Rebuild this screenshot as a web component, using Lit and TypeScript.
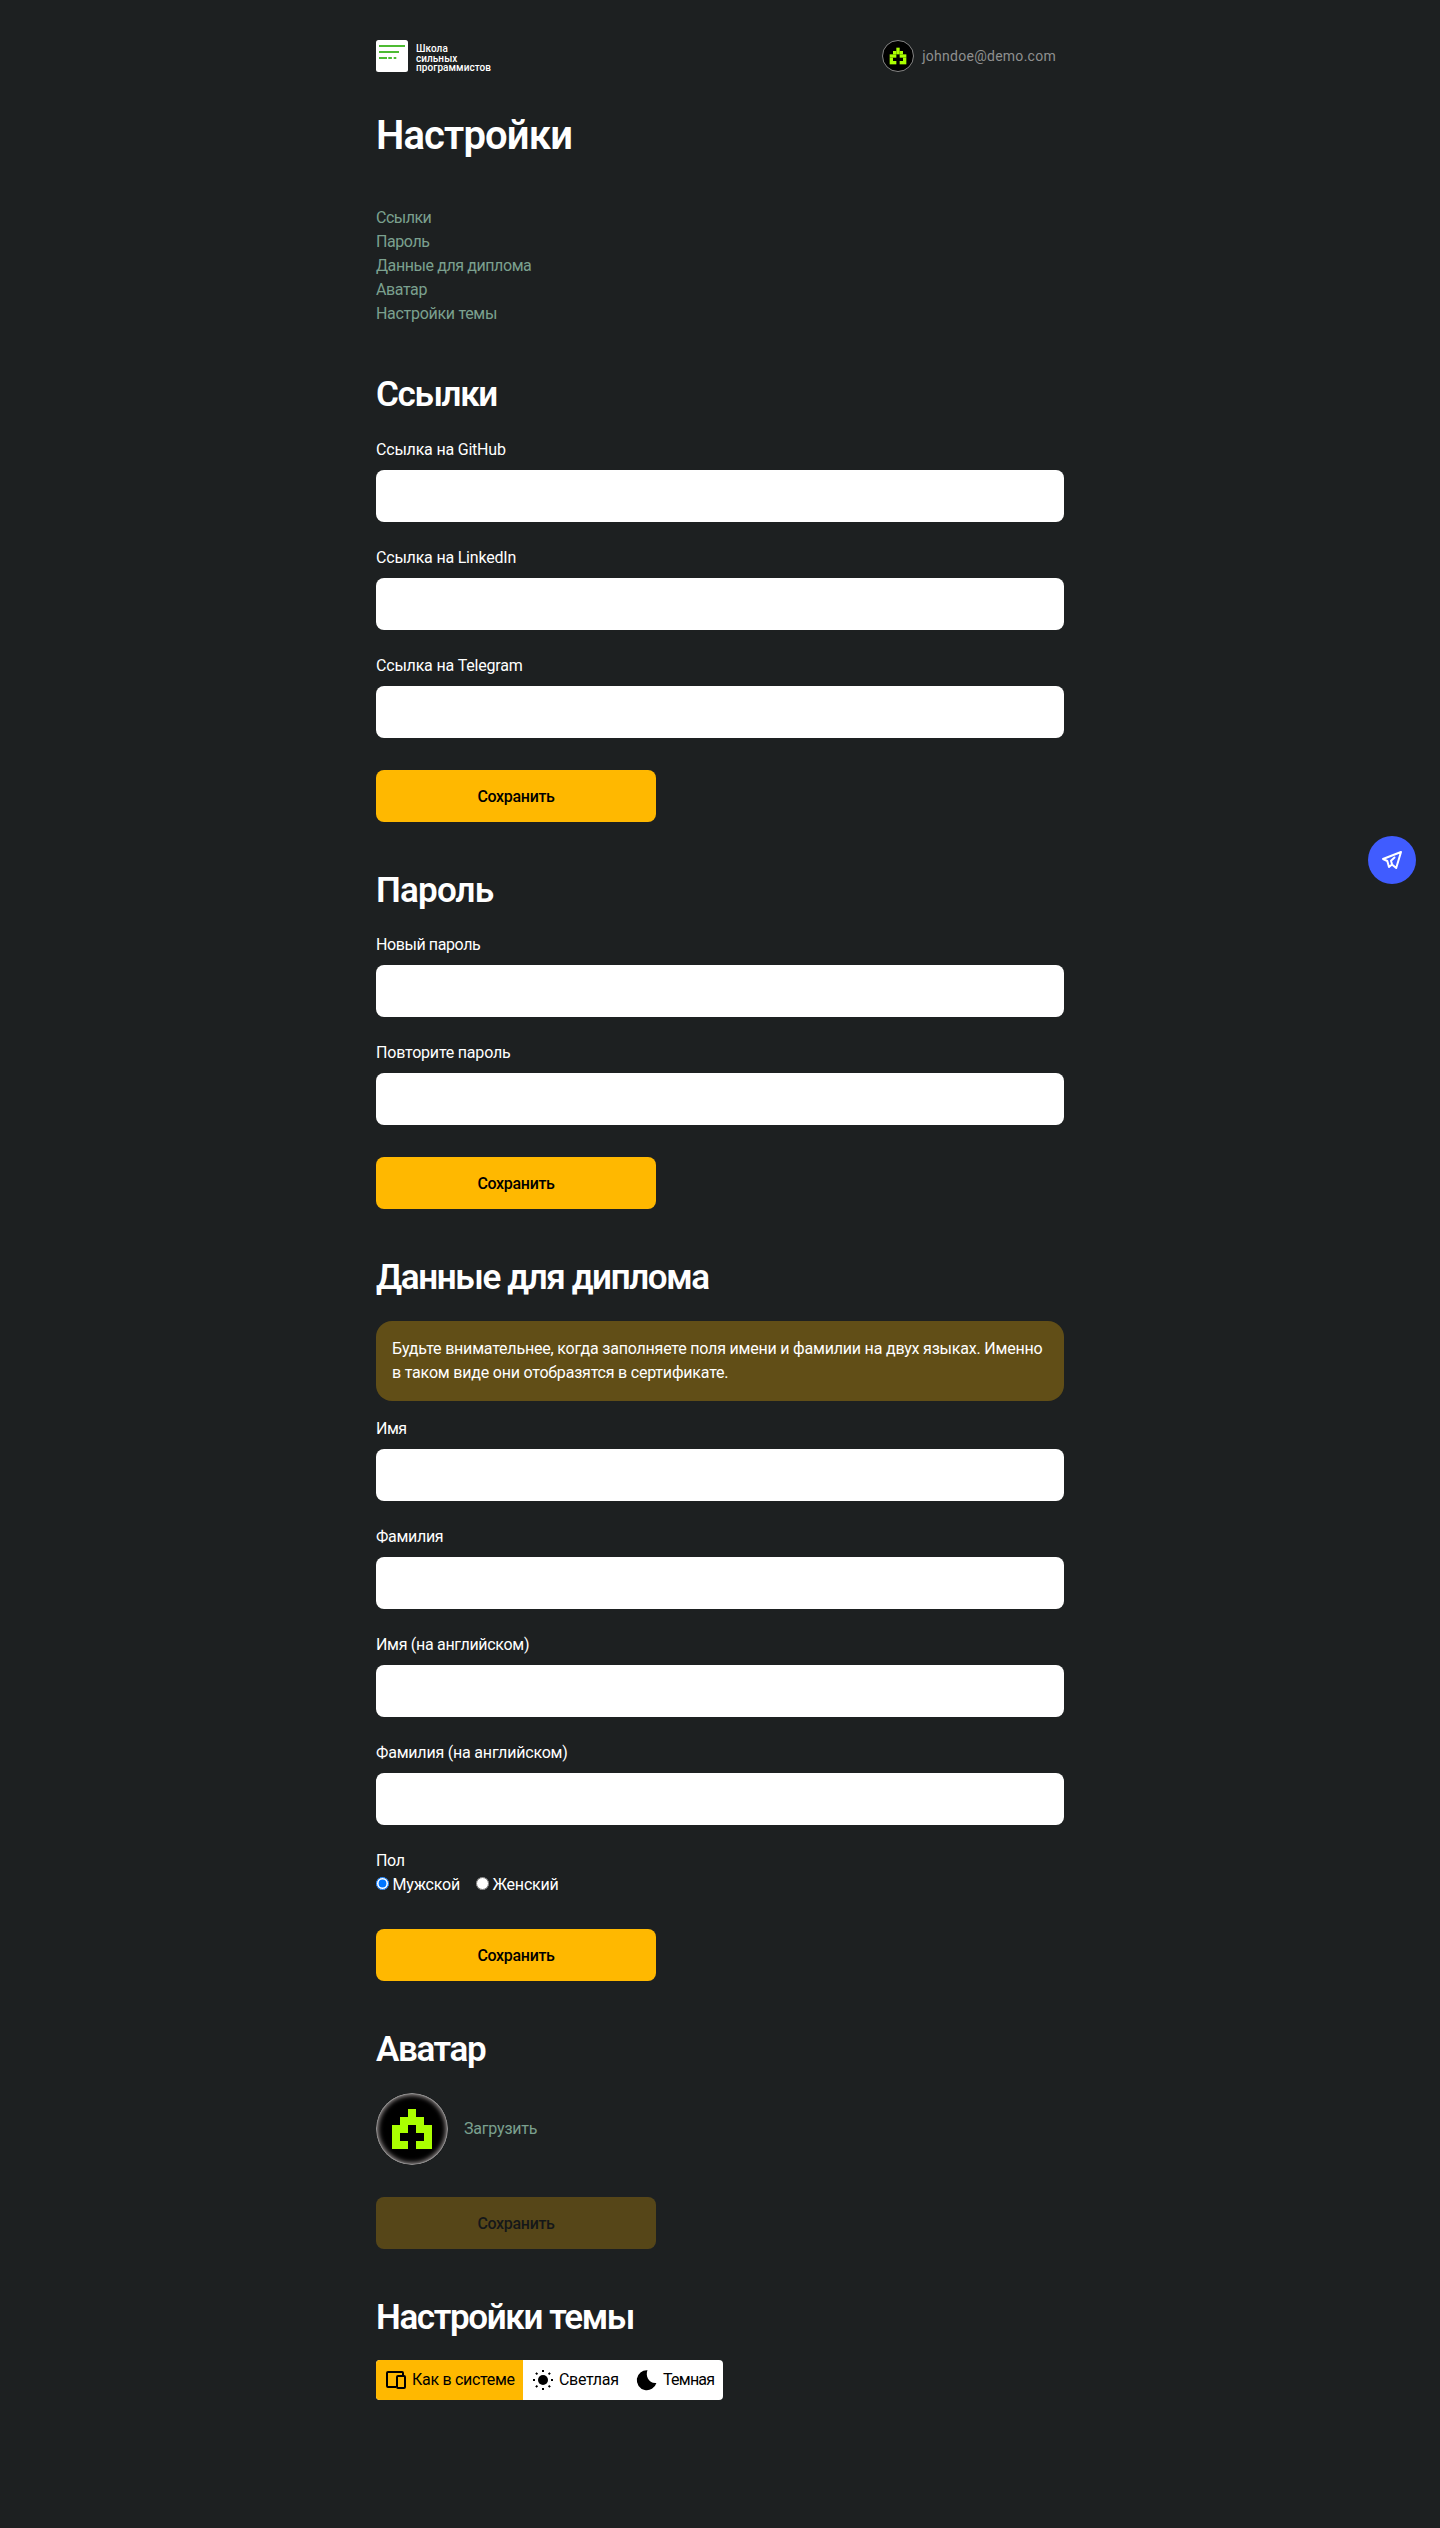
import { LitElement, html, svg, css } from "lit";

const AVATAR_CELLS: [number, number][] = [
  [4, 2],
  [3, 3], [4, 3], [5, 3],
  [2, 4], [3, 4], [5, 4], [6, 4],
  [2, 5], [6, 5],
  [2, 6], [3, 6], [5, 6], [6, 6],
];

const NAV: [string, string][] = [
  ["Ссылки", "t50"],
  ["Пароль", "t40"],
  ["Данные для диплома", "t40"],
  ["Аватар", "t40"],
  ["Настройки темы", "t30"],
];

class AppRoot extends LitElement {
  static styles = css`
    :host {
      display: block;
      min-height: 2528px;
      background: #1d2021;
      color: #fff;
      font: 400 16px/24px Roboto, "Liberation Sans", sans-serif;
    }
    * { box-sizing: border-box; }
    .page { width: 688px; margin: 0 auto; padding-top: 40px; }
    .header { display: flex; justify-content: space-between; height: 32px; }
    .logo { display: flex; gap: 8px; align-items: flex-start; }
    .logo svg { display: block; }
    .logo-text {
      padding-top: 4px;
      font-weight: 500;
      font-size: 10px;
      line-height: 9.6px;
      letter-spacing: 0.05px;
    }
    .logo-text span { display: block; }
    .user {
      display: flex;
      align-items: center;
      gap: 8px;
      padding-right: 8px;
      color: #8f9090;
      font-size: 14px;
      letter-spacing: 0.27px;
    }
    .avatar {
      position: relative;
      flex: none;
      border-radius: 50%;
      overflow: hidden;
      background: #000;
    }
    .avatar svg { display: block; width: 100%; height: 100%; }
    .avatar.small { width: 32px; height: 32px; border: 1px solid #858585; }
    .avatar.large { width: 72px; height: 72px; }
    .avatar.large::after {
      content: "";
      position: absolute;
      inset: 0;
      border-radius: 50%;
      box-shadow: inset 0 0 0 1px #8f8f8f, inset 0 0 5px 2px #a39c9c;
    }
    h1, h2 { margin: 0; font-weight: 600; white-space: nowrap; }
    h1 {
      margin-top: 42px;
      font-size: 40px;
      line-height: 44px;
      letter-spacing: -0.85px;
    }
    h2 {
      margin: 49px 0 23px;
      font-size: 35px;
      line-height: 39.6px;
      letter-spacing: -1.37px;
    }
    h2.loose { letter-spacing: -0.8px; }
    nav { display: flex; flex-direction: column; align-items: flex-start; margin-top: 48.2px; }
    a { color: #7ba08f; text-decoration: none; }
    .field { display: block; margin-bottom: 24px; }
    .field span { display: block; }
    .field input {
      display: block;
      width: 100%;
      height: 52px;
      margin: 8px 0 0;
      padding: 0 16px;
      border: 0;
      border-radius: 8px;
      background: #fff;
      font: inherit;
    }
    .save {
      display: block;
      width: 280px;
      height: 52px;
      margin: 32px 0 0;
      padding: 2px 0 0;
      border: 0;
      border-radius: 8px;
      background: #ffb800;
      color: #000;
      font: inherit;
      font-weight: 500;
      letter-spacing: -0.32px;
    }
    .save:disabled { opacity: 0.25; }
    .notice {
      margin-bottom: 16px;
      padding: 16px;
      border-radius: 16px;
      background: #614e17;
      letter-spacing: -0.2px;
    }
    .radios { display: flex; gap: 16px; }
    .radios label { letter-spacing: -0.2px; }
    .radios input { margin: 3px 3.5px 0 0; }
    .avatar-row { display: flex; align-items: center; gap: 16px; }
    .themes {
      display: inline-flex;
      height: 40px;
      border-radius: 4px;
      overflow: hidden;
      background: #fff;
      color: #000;
    }
    .theme { display: flex; align-items: center; gap: 4px; padding: 0 8px; white-space: nowrap; }
    .theme svg { flex: none; }
    .theme.system { width: 147px; background: #ffb800; }
    .theme.light { width: 104px; }
    .theme.dark { width: 96px; }
    .t20 { letter-spacing: -0.2px; }
    .t30 { letter-spacing: -0.3px; }
    .t40 { letter-spacing: -0.41px; }
    .t50 { letter-spacing: -0.52px; }
    .t75 { letter-spacing: -0.75px; }
    .chat {
      position: fixed;
      top: 836px;
      right: 24px;
      display: flex;
      align-items: center;
      justify-content: center;
      width: 48px;
      height: 48px;
      border-radius: 50%;
      background: #405cff;
    }
  `;

  avatar(size: string) {
    return html`<div class="avatar ${size}">
      <svg viewBox="0 0 9 9" fill="#af0">
        ${AVATAR_CELLS.map(([x, y]) => svg`<rect x=${x} y=${y} width="1" height="1"></rect>`)}
      </svg>
    </div>`;
  }

  field(label: string, tracking: string, type = "text") {
    return html`<label class="field"><span class=${tracking}>${label}</span><input type=${type} /></label>`;
  }

  save(disabled = false) {
    return html`<button class="save" ?disabled=${disabled}>Сохранить</button>`;
  }

  render() {
    return html`
      <div class="page">
        <header class="header">
          <div class="logo">
            <svg width="32" height="32" viewBox="0 0 32 32">
              <rect width="32" height="32" rx="2.5" fill="#fff" />
              <path d="M3 6h26M3 12h20M3 18h8M12.3 18h3.6M17.7 18h2.6" stroke="#4dbb32" stroke-width="1.9" />
            </svg>
            <div class="logo-text"><span>Школа</span><span>сильных</span><span>программистов</span></div>
          </div>
          <div class="user">${this.avatar("small")}<span>johndoe@demo.com</span></div>
        </header>
        <h1>Настройки</h1>
        <nav>${NAV.map(([label, tracking]) => html`<a class=${tracking}>${label}</a>`)}</nav>

        <h2>Ссылки</h2>
        ${this.field("Ссылка на GitHub", "t20")}
        ${this.field("Ссылка на LinkedIn", "t20")}
        ${this.field("Ссылка на Telegram", "t20")}
        ${this.save()}

        <h2 class="loose">Пароль</h2>
        ${this.field("Новый пароль", "t40", "password")}
        ${this.field("Повторите пароль", "t20", "password")}
        ${this.save()}

        <h2>Данные для диплома</h2>
        <div class="notice">
          Будьте внимательнее, когда заполняете поля имени и фамилии на двух языках. Именно в таком виде они отобразятся в сертификате.
        </div>
        ${this.field("Имя", "t50")}
        ${this.field("Фамилия", "t30")}
        ${this.field("Имя (на английском)", "t30")}
        ${this.field("Фамилия (на английском)", "t20")}
        <div>
          <div class="t30">Пол</div>
          <div class="radios">
            <label><input type="radio" name="sex" checked />Мужской</label>
            <label><input type="radio" name="sex" />Женский</label>
          </div>
        </div>
        ${this.save()}

        <h2>Аватар</h2>
        <div class="avatar-row">${this.avatar("large")}<a class="t20">Загрузить</a></div>
        ${this.save(true)}

        <h2>Настройки темы</h2>
        <div class="themes">
          <div class="theme system">
            <svg width="24" height="24" viewBox="0 0 24 24" fill="none" stroke="#000" stroke-width="2">
              <path d="M12 19H4a1 1 0 0 1-1-1V5a1 1 0 0 1 1-1h14a1 1 0 0 1 1 1v3" />
              <rect x="13" y="8" width="8" height="12" rx="1" />
            </svg>
            <span class="t30">Как в системе</span>
          </div>
          <div class="theme light">
            <svg width="24" height="24" viewBox="0 0 24 24" stroke="#000" stroke-width="2">
              <circle cx="12" cy="12" r="5" stroke="none" />
              <path d="M12 2v2M12 20v2M2 12h2M20 12h2M4.9 4.9l1.5 1.5M17.6 17.6l1.5 1.5M4.9 19.1l1.5-1.5M17.6 6.4l1.5-1.5" />
            </svg>
            <span class="t30">Светлая</span>
          </div>
          <div class="theme dark">
            <svg width="24" height="24" viewBox="0 0 24 24">
              <path d="M12.5 2.2C10.2 7.5 13.5 15.7 21.4 14.9A10 10 0 1 1 12.5 2.2z" />
            </svg>
            <span class="t75">Темная</span>
          </div>
        </div>
      </div>
      <div class="chat">
        <svg width="24" height="24" viewBox="0 0 24 24" fill="none" stroke="#fff" stroke-width="2" stroke-linejoin="round" stroke-linecap="round">
          <path d="M21 4L3 11l4.3 2L9 19l3-2.5 4.2 3.5zM14.5 9.5L11 12.7l1 3.500" />
        </svg>
      </div>
    `;
  }
}
customElements.define("app-root", AppRoot);
